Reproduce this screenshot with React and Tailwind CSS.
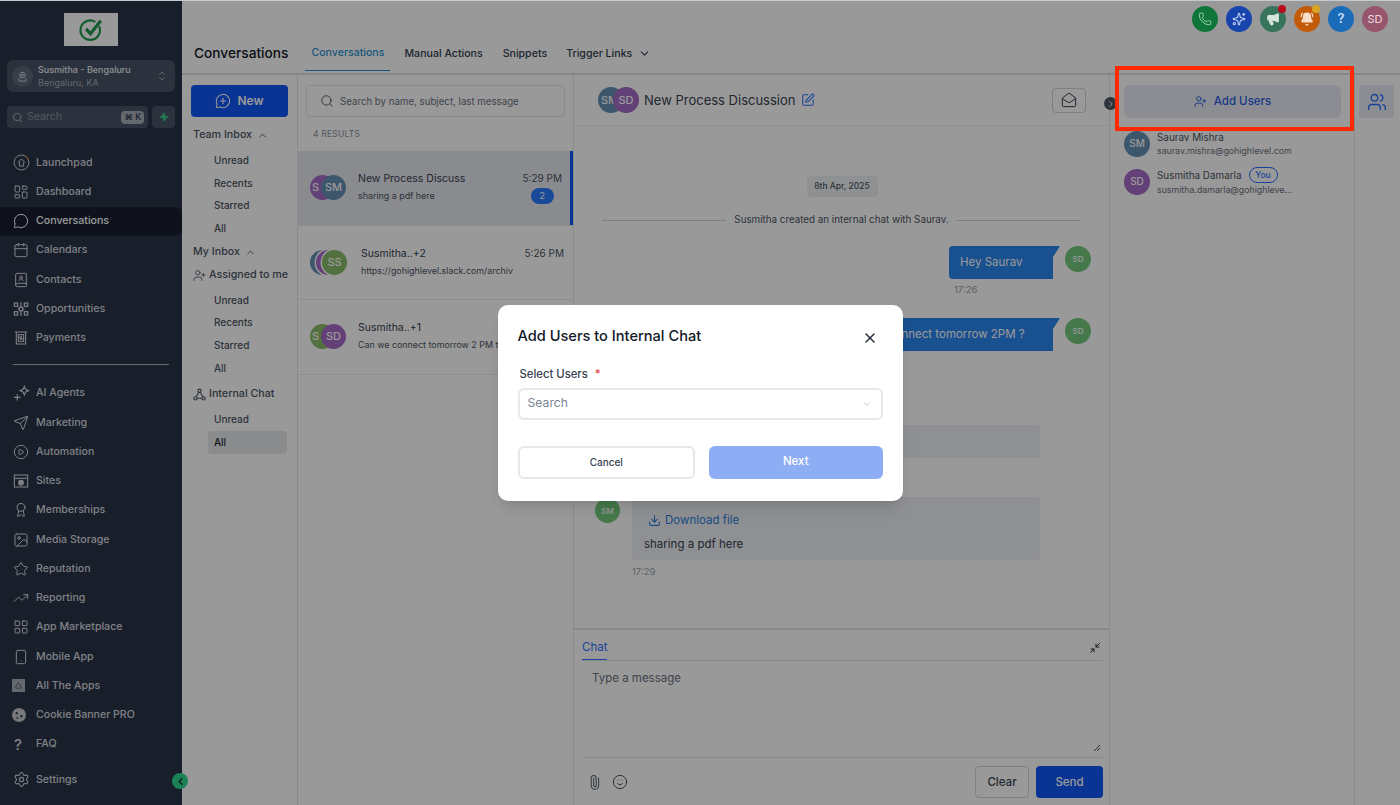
import React from 'react';
import {
  Award, BellRing, BookUser, Calendar, ChevronDown, ChevronLeft, ChevronRight, ChevronUp, ChevronsUpDown,
  CirclePlay, Download, Image, LayoutGrid, MailOpen, MessageCircle, MessageCirclePlus,
  Minimize2, Paperclip, Search, Send, Settings, Smartphone, Smile, SquarePen, Star, TrendingUp, UserPlus,
  Users, X, Zap, Phone, Sparkles, Megaphone, Triangle, LayoutDashboard,
} from 'lucide-react';

const Launchpad = () => (
  <svg width="17" height="17" viewBox="0 0 24 24" fill="none" stroke="currentColor" strokeWidth="1.4">
    <circle cx="12" cy="12" r="10.5" />
    <path d="M17 2.500a10.500 10.500 0 0 1 5 6" stroke="#e0803a" />
    <path d="M7 12l5-5 5 5M9 11v6h6v-6" />
  </svg>
);

const Opportunities = () => (
  <svg width="16" height="16" viewBox="0 0 24 24" fill="none" stroke="currentColor" strokeWidth="1.8">
    <rect x="2" y="3" width="5" height="5" />
    <rect x="17" y="3" width="5" height="5" />
    <rect x="2" y="16" width="5" height="5" />
    <rect x="17" y="16" width="5" height="5" />
    <rect x="9.500" y="9.500" width="5" height="5" />
    <path d="M12 2v7M12 15v7M7 12h2.500M14.500 12H17" />
  </svg>
);

const Payments = () => (
  <svg width="16" height="16" viewBox="0 0 24 24" fill="none" stroke="currentColor" strokeWidth="1.6">
    <path d="M3 3h18M5 3v18h14V3" />
    <rect x="8" y="7" width="8" height="10" />
    <path d="M13.500 10h-2.500a1 1 0 0 0 0 2h2a1 1 0 0 1 0 2h-3" />
  </svg>
);

const Agents = () => (
  <svg width="17" height="17" viewBox="0 0 24 24" fill="none" stroke="currentColor" strokeWidth="1.6">
    <path d="M16 2l1.800 4.200L22 8l-4.200 1.800L16 14l-1.800-4.200L10 8l4.200-1.800z" />
    <path d="M6 13v9M1.500 17.500h9" />
  </svg>
);

const Sites = () => (
  <svg width="16" height="16" viewBox="0 0 24 24" fill="none" stroke="currentColor" strokeWidth="1.6">
    <rect x="2" y="3" width="20" height="18" />
    <path d="M2 8h20" />
    <circle cx="12" cy="14.500" r="3.500" fill="currentColor" />
  </svg>
);

const AllApps = () => (
  <span className="w-[13px] h-[13px] bg-[#a8adb6] flex items-center justify-center -ml-[1px]">
    <Triangle size={7} className="text-[#2a3349]" strokeWidth={2} />
  </span>
);

const Cookie = () => (
  <svg width="14" height="14" viewBox="0 0 24 24" className="-ml-[1px]">
    <circle cx="12" cy="12" r="12" fill="#c6c9ce" />
    <circle cx="8" cy="9" r="2" fill="#2a3349" />
    <circle cx="16" cy="14" r="2" fill="#2a3349" />
    <circle cx="9" cy="17" r="1.500" fill="#2a3349" />
  </svg>
);

const InternalChat = () => (
  <svg width="13" height="13" viewBox="0 0 24 24" fill="none" stroke="currentColor" strokeWidth="2">
    <circle cx="12" cy="5" r="3" />
    <circle cx="4.500" cy="19" r="3" />
    <circle cx="19.500" cy="19" r="3" />
    <path d="M10.500 8L6 16.500M13.500 8L18 16.500M7.500 19h9" />
  </svg>
);

const ic = { size: 16, strokeWidth: 1.5 };

const navTop = [
  ['Launchpad', <Launchpad />],
  ['Dashboard', <LayoutDashboard {...ic} />],
  ['Conversations', <MessageCircle {...ic} />, true],
  ['Calendars', <Calendar {...ic} />],
  ['Contacts', <BookUser {...ic} />],
  ['Opportunities', <Opportunities />],
  ['Payments', <Payments />],
];

const navBottom = [
  ['AI Agents', <Agents />],
  ['Marketing', <Send {...ic} />],
  ['Automation', <CirclePlay {...ic} />],
  ['Sites', <Sites />],
  ['Memberships', <Award {...ic} />],
  ['Media Storage', <Image {...ic} />],
  ['Reputation', <Star {...ic} />],
  ['Reporting', <TrendingUp {...ic} />],
  ['App Marketplace', <LayoutGrid {...ic} />],
  ['Mobile App', <Smartphone {...ic} />],
  ['All The Apps', <AllApps />],
  ['Cookie Banner PRO', <Cookie />],
  ['FAQ', <span className="text-[15px] leading-none ml-[1px]">?</span>],
];

const NavItem = ({ label, icon, active }) => (
  <div className={`h-[29.25px] flex items-center pl-[13px] text-[10.600px] font-medium ${active ? 'bg-[#191f30] text-white rounded-r-md' : 'text-[#d5d8de]'}`}>
    <span className="w-[23px] flex items-center">{icon}</span>
    {label}
  </div>
);

const MapUser = () => (
  <svg width="11" height="11" viewBox="0 0 24 24" fill="none" stroke="#dfe2e7" strokeWidth="2">
    <circle cx="12" cy="9" r="6" />
    <circle cx="12" cy="9" r="2" />
    <path d="M7 16c-3 1-4 2-4 4 0 1 1 2 2 2h14c1 0 2-1 2-2 0-2-1-3-4-4" />
  </svg>
);

const Sidebar = () => (
  <aside className="w-[182px] shrink-0 bg-[#2a3349] flex flex-col pt-[13px]">
    <div className="mx-auto w-[54px] h-[33px] bg-white flex items-center justify-center">
      <svg width="26" height="26" viewBox="0 0 24 24" fill="none" stroke="#1f9a4c" strokeWidth="2">
        <path d="M19.500 8.500a9 9 0 1 1-3.500-4" />
        <path d="M7.500 11l4 4.500L21 3.500" strokeWidth="3" />
      </svg>
    </div>
    <div className="mx-[7px] mt-[14px] h-[32px] rounded-md bg-[#485466] flex items-center pl-[5px] pr-[7px]">
      <span className="w-[21px] h-[21px] rounded-full bg-[#5d6878] flex items-center justify-center">
        <MapUser />
      </span>
      <div className="ml-[5px] flex-1">
        <div className="text-[9px] leading-[13px] font-medium text-[#eceef1]">Susmitha - Bengaluru</div>
        <div className="text-[9px] leading-[13px] text-[#a5abb5]">Bengaluru, KA</div>
      </div>
      <ChevronsUpDown size={12} className="text-[#c5c9d0]" strokeWidth={1.4} />
    </div>
    <div className="mx-[7px] mt-[14px] flex gap-[4px]">
      <div className="w-[141px] h-[22px] rounded bg-[#485466] flex items-center pl-[5px] pr-[4px]">
        <Search size={11} className="text-[#aeb3bc]" />
        <span className="ml-[4px] flex-1 text-[10.500px] text-[#8a919d]">Search</span>
        <span className="h-[13px] px-[3px] rounded-sm bg-[#a8adb5] text-[8.500px] leading-[13px] font-medium text-[#2a3349]">⌘ K</span>
      </div>
      <div className="w-[23px] h-[22px] rounded bg-[#485466] flex items-center justify-center">
        <Zap size={10} className="text-[#3fd08a]" fill="#3fd08a" />
      </div>
    </div>
    <nav className="mt-[20px]">
      {navTop.map(([l, i, a]) => <NavItem key={l} label={l} icon={i} active={a} />)}
    </nav>
    <div className="mx-[13px] mt-[11px] mb-[14px] h-px bg-[#aab0ba]" />
    <nav>
      {navBottom.map(([l, i]) => <NavItem key={l} label={l} icon={i} />)}
    </nav>
    <div className="mt-[6px]">
      <NavItem label="Settings" icon={<Settings size={17} strokeWidth={1.5} />} />
    </div>
  </aside>
);

const SubLink = ({ label, active }) => (
  <div className={`ml-[26px] mr-[10px] h-[22.700px] rounded flex items-center pl-[6px] text-[10px] font-medium ${active ? 'bg-[#e6e8ec] text-[#1f2937]' : 'text-[#4b5563]'}`}>
    {label}
  </div>
);

const GroupTitle = ({ children, className }) => (
  <div className={`flex items-center gap-[5px] pl-[11px] text-[10.700px] font-medium text-[#4b5563] ${className}`}>
    {children}
  </div>
);

const InboxNav = () => (
  <div className="w-[116px] shrink-0 border-r border-[#e5e7eb] pt-[10px]">
    <div className="mx-[9px] h-[32px] rounded bg-[#1158f5] flex items-center justify-center gap-[6px] text-[12px] font-semibold text-white">
      <MessageCirclePlus size={16} strokeWidth={1.6} />
      New
    </div>
    <GroupTitle className="h-[17px] mt-[10px] mb-[5px]">Team Inbox <ChevronUp size={11} /></GroupTitle>
    {['Unread', 'Recents', 'Starred', 'All'].map((l) => <SubLink key={l} label={l} />)}
    <GroupTitle className="h-[17px] mt-[4px] mb-[6px]">My Inbox <ChevronUp size={11} /></GroupTitle>
    <GroupTitle className="h-[17px] !gap-[3px]"><UserPlus size={13} strokeWidth={1.6} /> Assigned to me</GroupTitle>
    <div className="mt-[5px]">
      {['Unread', 'Recents', 'Starred', 'All'].map((l) => <SubLink key={l} label={l} />)}
    </div>
    <GroupTitle className="h-[17px] mt-[6px] mb-[6px] !gap-[3px]"><InternalChat /> Internal Chat</GroupTitle>
    <SubLink label="Unread" />
    <SubLink label="All" active />
  </div>
);

const Avatar = ({ text, color, size = 'w-[26px] h-[26px] text-[11px]', className = '' }) => (
  <span className={`rounded-full flex items-center justify-center shrink-0 overflow-hidden font-medium text-white ${color} ${size} ${className}`}>
    {text}
  </span>
);

const ConvRow = ({ active, back, front, title, sub, time, badge, textLeft, timeRight }) => (
  <div className={`relative h-[74.600px] border-b border-[#ebedf0] flex ${active ? 'bg-[#e6e8ee]' : ''}`}>
    {active && <span className="absolute right-0 top-0 bottom-0 w-[3px] bg-[#1158f5]" />}
    <div className="w-[60px] pl-[12px] pt-[24px] flex">
      {back.map(([t, c], i) => (
        <Avatar key={i} text={t} color={c} size="w-[25px] h-[25px] text-[11px]" className={`justify-start pl-[2px] ${i ? '-ml-[19px] ring-[1.5px] ring-white' : ''}`} />
      ))}
      <Avatar text={front[0]} color={front[1]} size="w-[25px] h-[25px] text-[11px]" className={back.length > 1 ? '-ml-[19px] ring-[1.5px] ring-white' : '-ml-[14px]'} />
    </div>
    <div className={`flex-1 pt-[20px] ${textLeft}`}>
      <div className="text-[10.500px] leading-[16px] text-[#374151]">{title}</div>
      <div className="text-[8.900px] leading-[12px] mt-[3px] text-[#4b5563] whitespace-nowrap">{sub}</div>
    </div>
    {time && (
      <div className={`absolute top-[19px] flex flex-col items-center ${timeRight}`}>
        <span className="text-[10px] leading-[16px] text-[#4b5563]">{time}</span>
        {badge && <span className="mt-[2px] w-[23px] h-[16px] rounded-full bg-[#2b7cff] text-[9.500px] leading-[16px] text-center text-white">{badge}</span>}
      </div>
    )}
  </div>
);

const ConvList = () => (
  <div className="w-[276px] shrink-0 border-r border-[#e5e7eb] pt-[10px]">
    <div className="mx-[8px] h-[32px] rounded border border-[#e5e7eb] flex items-center pl-[13px] gap-[6px]">
      <Search size={14} className="text-[#4b5563]" strokeWidth={1.6} />
      <span className="pt-[2px] text-[9.700px] text-[#6b7280]">Search by name, subject, last message</span>
    </div>
    <div className="h-[34px] pl-[15px] flex items-center text-[8.500px] text-[#8a919d] tracking-wide">4 RESULTS</div>
    <div className="overflow-hidden">
      <ConvRow active back={[['S', 'bg-[#a56cc6]']]} front={['SM', 'bg-[#6490b4]']} title="New Process Discuss" sub="sharing a pdf here" time="5:29 PM" badge="2" timeRight="right-[11px]" />
      <ConvRow back={[['', 'bg-[#6490b4]'], ['', 'bg-[#a56cc6]']]} front={['SS', 'bg-[#8abc68]']} title="Susmitha..+2" sub="https://gohighlevel.slack.com/archiv" time="5:26 PM" timeRight="right-[9px]" textLeft="pl-[3px]" />
      <ConvRow back={[['S', 'bg-[#8abc68]']]} front={['SD', 'bg-[#a56cc6]']} title="Susmitha..+1" sub="Can we connect tomorrow 2 PM tomorrow" />
    </div>
  </div>
);

const Bubble = ({ children, className = '' }) => (
  <div className={`h-[33px] bg-[#2a85ee] text-white text-[11.500px] flex items-center [clip-path:polygon(0_0,100%_0,calc(100%-7px)_11px,calc(100%-7px)_100%,0_100%)] rounded-l ${className}`}>
    {children}
  </div>
);

const ChatPane = () => (
  <div className="w-[536px] shrink-0 flex flex-col border-r border-[#e5e7eb]">
    <div className="h-[51px] shrink-0 border-b border-[#ebedf0] flex items-center pl-[24px] pr-[23px]">
      <Avatar text="SM" color="bg-[#6490b4]" size="w-[26px] h-[26px] text-[11px]" className="justify-start pl-[3px]" />
      <Avatar text="SD" color="bg-[#a56cc6]" size="w-[26px] h-[26px] text-[11px]" className="-ml-[11px]" />
      <span className="ml-[5px] pt-[2px] text-[13px] text-[#374151]">New Process Discussion</span>
      <SquarePen size={14} className="ml-[6px] text-[#2b6fff]" strokeWidth={1.8} />
      <span className="ml-auto w-[34px] h-[25px] rounded border border-[#d1d5db] flex items-center justify-center">
        <MailOpen size={16} className="text-[#374151]" strokeWidth={1.5} />
      </span>
    </div>
    <div className="flex-1 flex flex-col">
      <div className="mt-[50px] self-center ml-[1px] w-[71px] h-[21px] rounded bg-[#eef0f3] flex items-center justify-center text-[8.500px] font-medium text-[#4b5563]">8th Apr, 2025</div>
      <div className="mt-[16px] mx-[28px] h-[14px] flex items-center gap-[8px]">
        <span className="flex-1 h-px bg-[#d1d5db]" />
        <span className="text-[9.800px] text-[#4b5563]">Susmitha created an internal chat with Saurav.</span>
        <span className="flex-1 h-px bg-[#d1d5db]" />
      </div>
      <div className="mt-[19px] flex justify-end pr-[18px] gap-[5px]">
        <Bubble className="w-[111px] pl-[11px]">Hey Saurav</Bubble>
        <Avatar text="SD" color="bg-[#74ca7e]" size="w-[26px] h-[26px] text-[8px]" />
      </div>
      <div className="ml-[380px] mt-[5px] text-[9.500px] leading-[12px] text-[#9ca3af]">17:26</div>
      <div className="mt-[22px] flex justify-end pr-[18px] gap-[5px]">
        <Bubble className="w-[227px] pl-[11px] whitespace-nowrap">Can we connect tomorrow 2PM ?</Bubble>
        <Avatar text="SD" color="bg-[#74ca7e]" size="w-[26px] h-[26px] text-[8px]" />
      </div>
      <div className="ml-[58px] mt-[74px] w-[408px] h-[33px] rounded bg-[#eef0f5]" />
      <div className="mt-[39px] flex pl-[21px]">
        <Avatar text="SM" color="bg-[#74ca7e]" size="w-[25px] h-[25px] text-[8px]" className="mt-[1px]" />
        <div className="ml-[12px] w-[408px] h-[63px] rounded bg-[#eef0f5] pl-[12px] pt-[13px]">
          <div className="pl-[4px] flex items-center gap-[4px] text-[11.500px] leading-[20px] text-[#2b7ed8]">
            <Download size={13} strokeWidth={2} />
            Download file
          </div>
          <div className="mt-[6px] text-[11.500px] leading-[16px] text-[#374151]">sharing a pdf here</div>
        </div>
      </div>
      <div className="ml-[58px] mt-[6px] text-[9.500px] leading-[12px] text-[#9ca3af]">17:29</div>
    </div>
    <div className="h-[177px] shrink-0 border-t-2 border-[#e5e7eb] flex flex-col pl-[8px] pr-[6px]">
      <div className="h-[31px] shrink-0 border-b border-[#e5e7eb] flex items-end justify-between">
        <span className="h-[24px] pt-[3px] border-b border-[#2b6fff] text-[11.500px] leading-[16px] text-[#2b6fff]">Chat</span>
        <Minimize2 size={12} className="mb-[6px] mr-[2px] text-[#1f2937]" />
      </div>
      <div className="relative h-[97px] shrink-0 border-b border-[#e5e7eb] pl-[10px] pt-[9px] text-[11.500px] text-[#6b7280]">
        Type a message
        <svg className="absolute right-[2px] bottom-[5px]" width="8" height="8" viewBox="0 0 8 8" stroke="#4b5563" strokeWidth="1">
          <path d="M1 7L7 1M4 7L7 4" />
        </svg>
      </div>
      <div className="flex-1 flex items-start pt-[8px]">
        <Paperclip size={15} className="ml-[5px] mt-[9px] text-[#4b5563] -rotate-45" strokeWidth={1.6} />
        <Smile size={16} className="ml-[10px] mt-[8px] text-[#4b5563]" strokeWidth={1.5} />
        <span className="ml-auto w-[54px] h-[32px] pt-px rounded border border-[#d1d5db] flex items-center justify-center text-[11.500px] font-medium text-[#374151]">Clear</span>
        <span className="ml-[7px] w-[67px] h-[32px] pt-px rounded bg-[#1158f5] flex items-center justify-center text-[11.500px] font-medium text-white">Send</span>
      </div>
    </div>
  </div>
);

const Member = ({ text, color, name, mail, you }) => (
  <div className="flex items-center h-[38px]">
    <Avatar text={text} color={color} size="w-[26px] h-[26px] text-[10px]" />
    <div className="ml-[7px] min-w-0">
      <div className="flex items-center gap-[7px] min-h-[13px] text-[9.900px] leading-[13px] text-[#4b5563]">
        {name}
        {you && <span className="w-[29px] h-[16px] rounded-full border border-[#2b6fff] text-[8.500px] font-medium text-[#2b6fff] flex items-center justify-center">You</span>}
      </div>
      <div className="text-[8.800px] leading-[13px] text-[#6b7280] whitespace-nowrap">{mail}</div>
    </div>
  </div>
);

const MembersPanel = () => (
  <div className="w-[245px] shrink-0 border-r border-[#e5e7eb] pt-[10px] px-[14px]">
    <div className="h-[33px] -mr-px rounded-md bg-[#e8ecf6] flex items-center justify-center gap-[7px] text-[11.500px] font-medium text-[#2b5fe0]">
      <UserPlus size={13} strokeWidth={1.8} />
      Add Users
    </div>
    <div className="mt-[6.500px]">
      <Member text="SM" color="bg-[#6490b4]" name="Saurav Mishra" mail="saurav.mishra@gohighlevel.com" />
      <Member text="SD" color="bg-[#a56cc6]" name="Susmitha Damarla" mail="susmitha.damarla@gohighleve..." you />
    </div>
  </div>
);

const topIcons = [
  ['bg-[#107538]', <Phone size={14} className="text-[#9dd4b4]" strokeWidth={1.6} />],
  ['bg-[#1744ad]', <Sparkles size={14} className="text-[#c9d8f8]" strokeWidth={1.8} />],
  ['bg-[#37745c]', <Megaphone size={14} className="text-[#d6e6df]" fill="#d6e6df" />, 'bg-[#b80d1c]'],
  ['bg-[#c25a08]', <BellRing size={14} className="text-[#f6dfcd]" fill="#f6dfcd" />, 'bg-[#d9a520]'],
  ['bg-[#1a6cb8]', <span className="text-[13px] font-semibold text-[#c9dff2]">?</span>],
  ['bg-[#98566e]', <span className="text-[11px] text-[#ecd9df]">SD</span>],
];

const Header = () => (
  <header className="h-[75px] shrink-0 border-b-2 border-[#dde0e4] flex flex-col">
    <div className="h-[32px] shrink-0 pt-[6px] pr-[12px] flex justify-end gap-[8px]">
      {topIcons.map(([bg, icon, dot], i) => (
        <span key={i} className={`relative z-20 w-[26px] h-[26px] rounded-full flex items-center justify-center ${bg}`}>
          {icon}
          {dot && <span className={`absolute top-[-1px] right-[0px] w-[8px] h-[8px] rounded-full ${dot}`} />}
        </span>
      ))}
    </div>
    <div className="flex-1 flex items-stretch pl-[12px]">
      <span className="flex items-center text-[13.700px] font-medium text-[#111827] pt-[1px]">Conversations</span>
      <span className="ml-[17px] mb-[2px] pt-[4px] px-[6px] flex items-center border-b border-[#2b8fd0] text-[10.600px] font-medium text-[#2b8fd0]">Conversations</span>
      <span className="ml-[14px] pt-[2px] flex items-center text-[10.600px] font-medium text-[#374151]">Manual Actions</span>
      <span className="ml-[20px] pt-[2px] flex items-center text-[10.600px] font-medium text-[#374151]">Snippets</span>
      <span className="ml-[19px] pt-[2px] flex items-center gap-[6px] text-[10.600px] font-medium text-[#374151]">Trigger Links <ChevronDown size={13} /></span>
    </div>
  </header>
);

const Modal = () => (
  <div className="w-[405px] h-[196px] rounded-[10px] bg-white shadow-lg px-[20px] pt-[21px]">
    <div className="flex items-center justify-between h-[22px]">
      <span className="text-[14.600px] font-medium text-[#111827]">Add Users to Internal Chat</span>
      <X size={16} className="mr-[5px] mt-[3px] text-[#1f2937]" strokeWidth={2.2} />
    </div>
    <div className="mt-[19px] ml-[2px] h-[16px] flex items-center text-[11.300px] font-medium text-[#374151]">
      Select Users
      <span className="ml-[7px] text-[#e5484d]">*</span>
    </div>
    <div className="mt-[5px] h-[32px] rounded-md border-2 border-[#e5e7eb] flex items-center justify-between pl-[8px] pr-[9px] text-[12.200px] text-[#7b8494]">
      Search
      <ChevronDown size={10} className="text-[#b6bbc4]" />
    </div>
    <div className="mt-[26px] flex gap-[14px]">
      <span className="flex-1 h-[33px] rounded-md border-2 border-[#e5e7eb] flex items-center justify-center text-[10px] font-medium text-[#374151]">Cancel</span>
      <span className="flex-1 h-[33px] rounded-md bg-[#8dadf5] flex items-center justify-center text-[11.500px] font-medium text-white">Next</span>
    </div>
  </div>
);

export default function App() {
  return (
    <div className="relative w-[1400px] h-[805px] overflow-hidden flex bg-white font-['Inter',sans-serif]">
      <Sidebar />
      <main className="flex-1 min-w-0 flex flex-col">
        <Header />
        <div className="flex-1 min-h-0 flex">
          <InboxNav />
          <ConvList />
          <ChatPane />
          <MembersPanel />
          <div className="flex-1 pt-[10px] pl-[4px] pr-[6px]">
            <div className="h-[33px] rounded bg-[#e8ecf6] flex items-center justify-center">
              <Users size={20} className="text-[#2b6fff]" strokeWidth={1.6} />
            </div>
          </div>
        </div>
      </main>
      <span className="absolute left-[1104px] top-[97px] w-[13px] h-[13px] rounded-full bg-[#4b5563] text-white flex items-center justify-center">
        <ChevronRight size={10} strokeWidth={2.4} />
      </span>
      <span className="absolute left-[172px] top-[773px] w-[16px] h-[16px] rounded-full bg-[#2fd98f] flex items-center justify-center">
        <ChevronLeft size={11} strokeWidth={3} className="text-[#1f2937]" />
      </span>
      <div className="absolute inset-0 z-10 bg-black/40 flex items-center justify-center">
        <Modal />
      </div>
      <div className="absolute z-20 left-0 right-0 top-0 h-px bg-[#c5cad0]" />
      <div className="absolute z-20 left-[1115px] top-[66px] w-[239px] h-[65px] border-[4px] border-[#ff2a00]" />
    </div>
  );
}
